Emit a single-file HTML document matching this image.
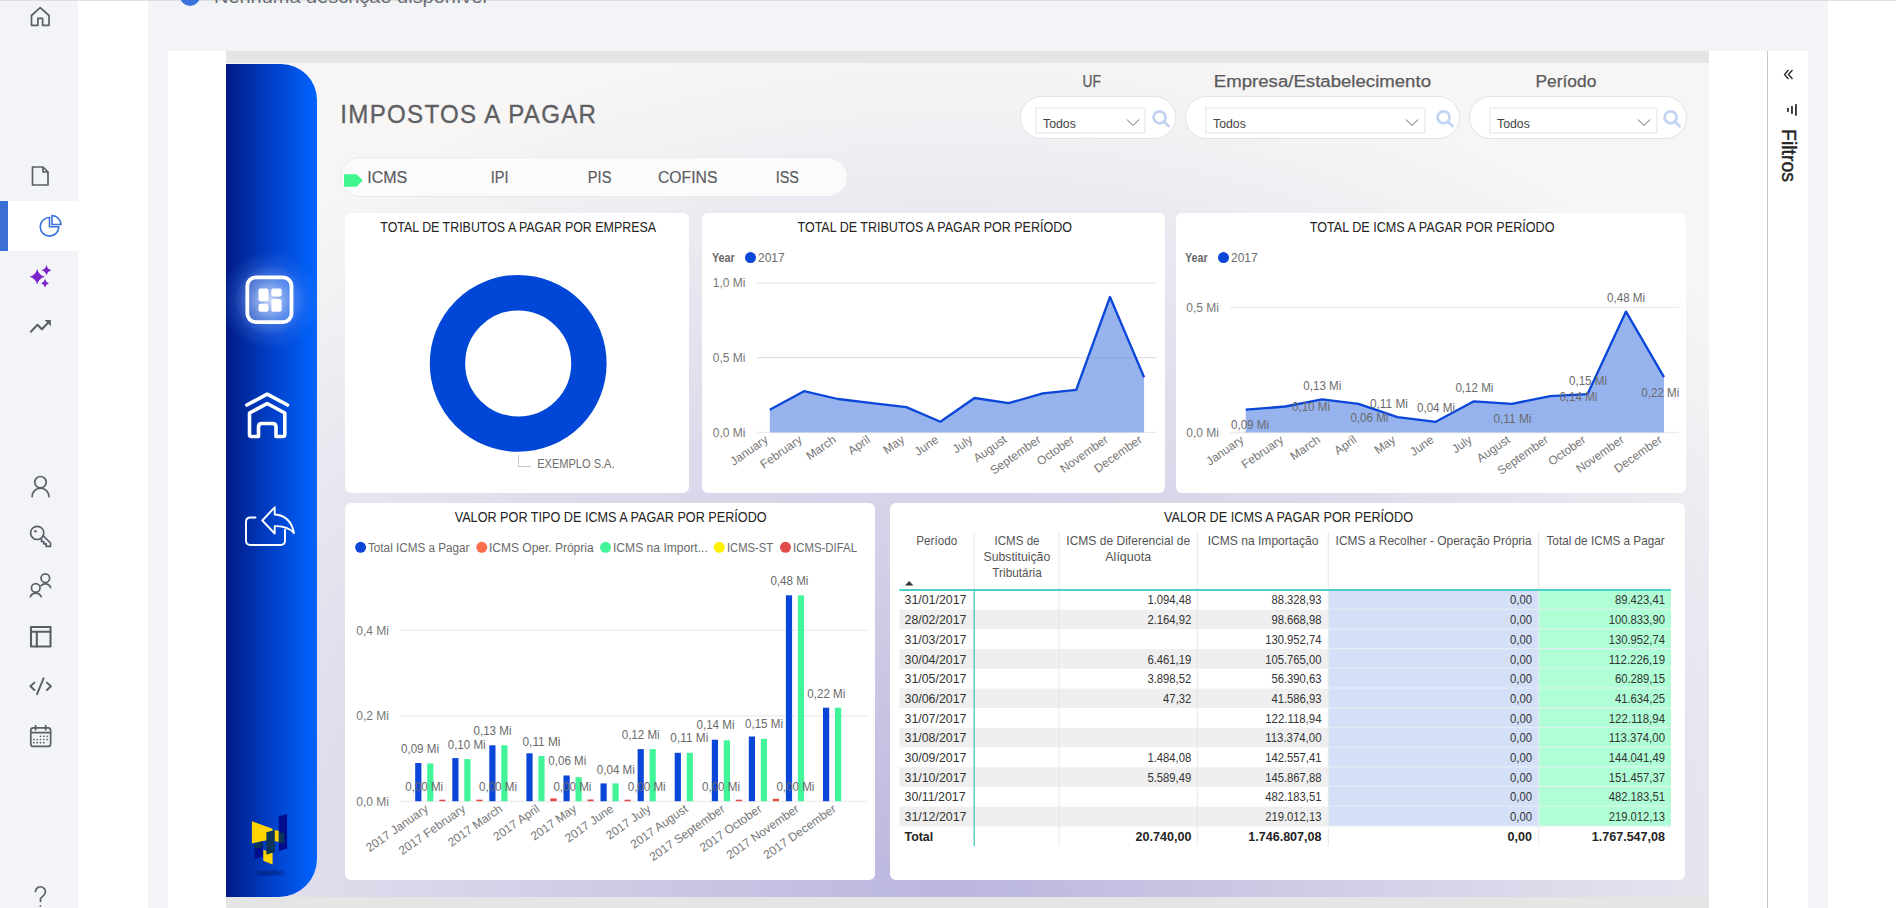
<!DOCTYPE html>
<html><head><meta charset="utf-8">
<style>
*{margin:0;padding:0;box-sizing:border-box}
html,body{width:1896px;height:908px;overflow:hidden;background:#fff;font-family:"Liberation Sans",sans-serif}
.a{position:absolute}
#topline{left:0;top:0;width:1896px;height:1px;background:#dddfdc}
#side{left:0;top:1px;width:78px;height:907px;background:#f3f4f8}
#main{left:148px;top:1px;width:1680px;height:907px;background:#f3f4f8}
#card{left:168px;top:51px;width:1640px;height:857px;background:#fff}
#canvas{left:226px;top:51px;width:1483px;height:857px;background:#e5e5e5}
#bg{left:226px;top:63px;width:1483px;height:834px;background:radial-gradient(ellipse 1050px 860px at 724px 834px,#bab6de 0%,#f7f6f5 100%)}
#bluebar{left:226px;top:64px;width:91px;height:833px;border-radius:0 36px 38px 0;
 background:linear-gradient(90deg,#001b84 0%,#0040c8 50%,#0064ff 100%)}
.tab{top:167px;font-size:16.5px;color:#5b5c60;line-height:20px;white-space:nowrap;letter-spacing:-0.6px}
.flab{top:70px;font-size:16.5px;color:#5a5a5c;text-align:center;line-height:22px;white-space:nowrap}
.pill{top:96px;height:43px;border-radius:21.5px;background:#fff;border:1px solid #e3e3e5}
.dd{top:106.5px;height:27px;border:2px solid #f1f1f1;background:#fff}
.dd span{position:absolute;left:6px;top:8.5px;font-size:12.3px;color:#444;line-height:14px}
.cardw{background:#fff;border-radius:6px}
.ttl{font-size:14px;color:#252423;text-align:center;white-space:nowrap}
</style></head><body>
<div class="a" id="topline"></div>
<div class="a" id="side"></div>
<div class="a" id="main"></div>
<div class="a" id="card"></div>
<div class="a" id="canvas"></div>
<div class="a" id="bg"></div>
<div class="a" id="bluebar"></div>



<!-- bluebar icons -->
<div class="a" style="left:226px;top:230px;width:91px;height:140px;background:radial-gradient(circle at 44px 70px,rgba(210,225,255,0.9) 0,rgba(150,185,255,0.5) 20px,rgba(100,150,255,0.18) 36px,rgba(60,120,255,0) 50px)"></div>
<svg class="a" style="left:226px;top:64px" width="91" height="833" viewBox="226 64 91 833">
 <rect x="247.3" y="277.3" width="44.2" height="44.8" rx="8.5" fill="rgba(255,255,255,0.12)" stroke="#fff" stroke-width="3.8"/>
 <g fill="#fff">
  <rect x="258.5" y="288.5" width="10" height="12.7" rx="2"/>
  <rect x="258.5" y="303.7" width="10" height="8" rx="2"/>
  <rect x="271.3" y="288.5" width="10.3" height="8" rx="2"/>
  <rect x="271.3" y="299" width="10.3" height="12.7" rx="2"/>
 </g>
 <g fill="none" stroke="#fff" stroke-width="3.6" stroke-linecap="round" stroke-linejoin="round">
  <path d="M246.8 405 L267.2 394.2 L287.6 405"/>
  <path d="M249.5 413 L267.2 403.5 L284.8 413 V434.5 Q284.8 436.5 282.8 436.5 H276 V427 Q276 423.5 272.5 423.5 H262 Q258.5 423.5 258.5 427 V436.5 H251.5 Q249.5 436.5 249.5 434.5 Z"/>
 </g>
 <g fill="none" stroke="#fff" stroke-width="1.9" stroke-linejoin="round" stroke-linecap="round">
  <path d="M255.5 517.5 H250.5 Q246 517.5 246 522 V540.5 Q246 545 250.5 545 H280.5 Q285 545 285 540.5 V529.8"/>
  <path d="M262.3 520.5 L274.7 507.3 V514.5 Q290.5 515.5 294 533 Q287 525.5 274.7 526.2 V533.5 Z"/>
 </g>
 <ellipse cx="270" cy="873" rx="15" ry="2.5" fill="rgba(0,20,90,0.55)" filter="url(#blur1)"/>
 <defs><filter id="blur1"><feGaussianBlur stdDeviation="1.5"/></filter></defs>
 <polygon points="251.9,821.2 272.6,828.7 272.6,839 251.9,843.5" fill="#ffd400"/>
 <polygon points="278.8,816.3 287.1,813.9 287.1,848.5 278.8,851" fill="#000d8c"/>
 <polygon points="254.5,844 262.9,841 262.9,856.4 254.5,859" fill="#000d8c"/>
 <polygon points="263.3,849.8 272.6,852.9 272.6,864.4 263.3,860.8" fill="#ffd400"/>
 <polygon points="266.4,832.2 274.8,830 274.8,852 266.4,854.7" fill="#0d3557"/>
 <polygon points="274.8,830 278.8,831 278.8,842 274.8,841" fill="#ffd400"/>
 <polygon points="278.8,832 284.3,833.3 284.3,843.8 278.8,842.5" fill="#0d3557"/>
 <polygon points="254.5,844 262.9,841 262.9,847 254.5,849" fill="#0d3557"/>
</svg>

<!-- left sidebar icons -->
<svg class="a" style="left:0;top:0" width="78" height="908" viewBox="0 0 78 908">
 <g fill="none" stroke="#5a5e67" stroke-width="1.7" stroke-linejoin="round" stroke-linecap="round">
  <path d="M31.5 15.5 L40.2 7.6 L49 15.5 V25.3 H42.6 V18.4 H37.9 V25.3 H31.5 Z"/>
  <path d="M32.5 167 H43 L48 172 V185 H32.5 Z M43 167 V172 H48"/>
  <path d="M30.9 331.8 L37.5 324.8 L41.9 329.2 L48.8 322" stroke-width="2"/>
  <circle cx="40.5" cy="482.2" r="5.7"/>
  <path d="M32.1 496.6 A8.4 8.4 0 0 1 48.9 496.6"/>
  <circle cx="37.2" cy="532.9" r="6.6"/>
  <path d="M43.2 535.9 L50.5 543 V546.4 H46.2 V543.9 H43.9 V541.6 H41.5 V539"/>
  <circle cx="45.3" cy="578.2" r="4.3"/>
  <path d="M41 585.6 A5.8 5.8 0 0 1 50.6 587.5"/>
  <circle cx="35.75" cy="587.9" r="4.3"/>
  <path d="M30.4 596.7 A5.8 5.8 0 0 1 41.1 596.7"/>
  <rect x="31" y="627" width="19.5" height="19.5" stroke-width="2.1"/>
  <path d="M31 631.8 H50.5 M36.8 631.8 V646.5" stroke-width="2.1"/>
  <path d="M34.4 682.6 L30.4 686.3 L34.4 690 M46.9 682.6 L50.9 686.3 L46.9 690" stroke-width="1.9"/><path d="M43.6 678.3 L37 694.2" stroke-width="1.9"/>
  <rect x="30.8" y="727.8" width="19.8" height="18.6" rx="2.5"/>
  <path d="M30.8 732.6 H50.6 M35.6 725.5 V729.8 M45.7 725.5 V729.8"/>
  <path d="M35.5 891.5 A5 4.8 0 1 1 44 895 L40.5 898.5 V901.5"/>
 </g>
 <g fill="#5a5e67">
  <circle cx="40.3" cy="905.8" r="0.9"/>
  <polygon points="44.6,320 50.9,320 50.9,326.3"/>
  <circle cx="40.5" cy="736.3" r="0.85"/><circle cx="43.8" cy="736.3" r="0.85"/><circle cx="47.1" cy="736.3" r="0.85"/>
  <circle cx="33.9" cy="739.5" r="0.85"/><circle cx="37.2" cy="739.5" r="0.85"/><circle cx="40.5" cy="739.5" r="0.85"/><circle cx="43.8" cy="739.5" r="0.85"/><circle cx="47.1" cy="739.5" r="0.85"/>
  <circle cx="33.9" cy="742.7" r="0.85"/><circle cx="37.2" cy="742.7" r="0.85"/><circle cx="40.5" cy="742.7" r="0.85"/><circle cx="43.8" cy="742.7" r="0.85"/>
  <circle cx="35.4" cy="531.3" r="1.2"/>
 </g>
 <rect x="0" y="201" width="78" height="50" fill="#fff"/>
 <rect x="0" y="201" width="8" height="50" fill="#3b6fd6"/>
 <g fill="none" stroke="#3a72df" stroke-width="1.6">
  <path d="M49.5 217.5 A9.3 9.3 0 1 0 58.8 226.8 H49.5 Z"/>
  <path d="M52 215.5 A9.3 9.3 0 0 1 61 224.5 H52 Z"/>
 </g>
 <g fill="#7b23cc">
  <path d="M37.2 269 Q38.8 275.2 45 276.8 Q38.8 278.4 37.2 284.6 Q35.6 278.4 29.4 276.8 Q35.6 275.2 37.2 269 Z"/>
  <path d="M46.5 265 Q47.5 269.3 51.5 270.3 Q47.5 271.3 46.5 275.5 Q45.5 271.3 41.5 270.3 Q45.5 269.3 46.5 265 Z"/>
  <path d="M45 279 Q45.9 282.4 49 283.3 Q45.9 284.2 45 287.6 Q44.1 284.2 41 283.3 Q44.1 282.4 45 279 Z"/>
 </g>
</svg>

<!-- cards -->
<div class="a cardw" style="left:345px;top:213px;width:344px;height:280px"></div>
<div class="a cardw" style="left:702px;top:213px;width:463px;height:280px"></div>
<div class="a cardw" style="left:1176px;top:213px;width:510px;height:280px"></div>
<div class="a cardw" style="left:345px;top:503px;width:530px;height:377px"></div>
<div class="a cardw" style="left:890px;top:503px;width:795px;height:377px"></div>


<!-- top description -->
<div class="a" style="left:180px;top:-14px;width:20px;height:20px;border-radius:50%;background:#3b73de"></div>
<svg class="a" style="left:0;top:0" width="600" height="12" viewBox="0 0 600 12"><text x="214" y="2.5" font-family='"Liberation Sans",sans-serif' font-size="19" fill="#6b6e75" textLength="273" lengthAdjust="spacingAndGlyphs">Nenhuma descrição disponível</text></svg>

<!-- title -->
<svg class="a" style="left:0;top:0" width="700" height="140" viewBox="0 0 700 140"><text x="340.3" y="123.3" font-family='"Liberation Sans",sans-serif' font-size="26" letter-spacing="1.4" fill="#5e5f63" stroke="#5e5f63" stroke-width="0.35" textLength="257" lengthAdjust="spacingAndGlyphs">IMPOSTOS A PAGAR</text></svg>

<!-- tabs -->
<div class="a" style="left:340px;top:157px;width:508px;height:40px;border-radius:20px;background:#fbfbfb;border:1px solid #e9e9eb"></div>
<svg class="a" style="left:343px;top:173px" width="22" height="15" viewBox="0 0 22 15"><path d="M1 1.2 H13.5 L19.8 7.5 L13.5 13.8 H1 Z" fill="#3ef88f"/></svg>
<svg class="a" style="left:0;top:0" width="900" height="200" viewBox="0 0 900 200"><g font-family='"Liberation Sans",sans-serif' font-size="16.7" fill="#5b5c60" stroke="#5b5c60" stroke-width="0.2">
<text x="367.2" y="182.5" textLength="40" lengthAdjust="spacingAndGlyphs">ICMS</text>
<text x="490.8" y="182.5" textLength="17.8" lengthAdjust="spacingAndGlyphs">IPI</text>
<text x="587.8" y="182.5" textLength="23.6" lengthAdjust="spacingAndGlyphs">PIS</text>
<text x="658" y="182.5" textLength="59.5" lengthAdjust="spacingAndGlyphs">COFINS</text>
<text x="775.7" y="182.5" textLength="23.2" lengthAdjust="spacingAndGlyphs">ISS</text>
</g></svg>

<!-- slicers -->
<svg class="a" style="left:0;top:0" width="1709" height="100" viewBox="0 0 1709 100">
 <g font-family='"Liberation Sans",sans-serif' font-size="16.3" fill="#5a5a5c" stroke="#5a5a5c" stroke-width="0.25">
  <text x="1082.6" y="86.6" textLength="18.4" lengthAdjust="spacingAndGlyphs">UF</text>
  <text x="1213.8" y="86.6" textLength="217.2" lengthAdjust="spacingAndGlyphs">Empresa/Estabelecimento</text>
  <text x="1535.5" y="86.6" textLength="60.8" lengthAdjust="spacingAndGlyphs">Período</text>
 </g>
</svg>
<div class="a pill" style="left:1020px;width:156px"></div>
<div class="a pill" style="left:1185px;width:275px"></div>
<div class="a pill" style="left:1469px;width:218px"></div>
<div class="a dd" style="left:1035px;width:111px"><span>Todos</span></div>
<div class="a dd" style="left:1205px;width:221px"><span>Todos</span></div>
<div class="a dd" style="left:1489px;width:169px"><span>Todos</span></div>
<svg class="a" style="left:0;top:0" width="1709" height="150" viewBox="0 0 1709 150">
 <g fill="none" stroke="#666" stroke-width="1">
  <path d="M1127 119.5 L1133 125.5 L1139 119.5"/>
  <path d="M1406 119.5 L1412 125.5 L1418 119.5"/>
  <path d="M1638 119.5 L1644 125.5 L1650 119.5"/>
 </g>
 <g fill="none" stroke="#c2d3f2" stroke-width="2.7" stroke-linecap="round">
  <circle cx="1159.6" cy="117.3" r="6"/><path d="M1164 121.8 L1168.5 126"/>
  <circle cx="1443.6" cy="117.3" r="6"/><path d="M1448 121.8 L1452.5 126"/>
  <circle cx="1670.6" cy="117.3" r="6"/><path d="M1675 121.8 L1679.5 126"/>
 </g>
</svg>

<!-- CHARTS_START -->
<svg class="a" style="left:0;top:0" width="1896" height="908" viewBox="0 0 1896 908"><text x="380.3" y="232" font-size="14.5" fill="#252423" textLength="275.7" lengthAdjust="spacingAndGlyphs" font-family='"Liberation Sans",sans-serif'>TOTAL DE TRIBUTOS A PAGAR POR EMPRESA</text><text x="797.5" y="232" font-size="14.5" fill="#252423" textLength="274.5" lengthAdjust="spacingAndGlyphs" font-family='"Liberation Sans",sans-serif'>TOTAL DE TRIBUTOS A PAGAR POR PERÍODO</text><text x="1309.7" y="232" font-size="14.5" fill="#252423" textLength="244.79999999999995" lengthAdjust="spacingAndGlyphs" font-family='"Liberation Sans",sans-serif'>TOTAL DE ICMS A PAGAR POR PERÍODO</text><text x="454.7" y="522" font-size="14.5" fill="#252423" textLength="311.90000000000003" lengthAdjust="spacingAndGlyphs" font-family='"Liberation Sans",sans-serif'>VALOR POR TIPO DE ICMS A PAGAR POR PERÍODO</text><text x="1164" y="522" font-size="14.5" fill="#252423" textLength="249" lengthAdjust="spacingAndGlyphs" font-family='"Liberation Sans",sans-serif'>VALOR DE ICMS A PAGAR POR PERÍODO</text><circle cx="518.2" cy="363.4" r="70.7" fill="none" stroke="#0047d7" stroke-width="35.4"/><path d="M518.5 455 V466.5 H531" fill="none" stroke="#c8c8c8" stroke-width="1"/><text x="537.2" y="467.5" font-size="12.5" fill="#6f6f6f" textLength="77.3" lengthAdjust="spacingAndGlyphs" font-family='"Liberation Sans",sans-serif'>EXEMPLO S.A.</text><text x="712" y="261.90000000000003" font-size="12" font-weight="bold" fill="#6a6a6a" textLength="22.8" lengthAdjust="spacingAndGlyphs" font-family='"Liberation Sans",sans-serif'>Year</text><circle cx="750.5" cy="257.6" r="5.5" fill="#0a46d8"/><text x="758" y="261.90000000000003" font-size="12" fill="#6a6a6a" font-family='"Liberation Sans",sans-serif'>2017</text><text x="1185" y="261.90000000000003" font-size="12" font-weight="bold" fill="#6a6a6a" textLength="22.8" lengthAdjust="spacingAndGlyphs" font-family='"Liberation Sans",sans-serif'>Year</text><circle cx="1223.5" cy="257.6" r="5.5" fill="#0a46d8"/><text x="1231" y="261.90000000000003" font-size="12" fill="#6a6a6a" font-family='"Liberation Sans",sans-serif'>2017</text><line x1="757" y1="283" x2="1156.5" y2="283" stroke="#ececec" stroke-width="1.3"/><line x1="757" y1="357.7" x2="1156.5" y2="357.7" stroke="#ececec" stroke-width="1.3"/><line x1="757" y1="432.4" x2="1156.5" y2="432.4" stroke="#ececec" stroke-width="1.3"/><text x="745.5" y="287.3" font-size="12" fill="#777" text-anchor="end" font-family='"Liberation Sans",sans-serif'>1,0 Mi</text><text x="745.5" y="362.0" font-size="12" fill="#777" text-anchor="end" font-family='"Liberation Sans",sans-serif'>0,5 Mi</text><text x="745.5" y="436.7" font-size="12" fill="#777" text-anchor="end" font-family='"Liberation Sans",sans-serif'>0,0 Mi</text><path d="M769.8 432.4 L769.8 409.7 L804.0 391.2 L838.0 399.0 L872.2 403.2 L906.3 407.1 L940.4 421.7 L974.5 398.0 L1008.6 403.2 L1042.8 393.4 L1076.2 389.9 L1110.0 297.0 L1144.1 377.2 L1144.1 432.4 Z" fill="#97b3ee"/><path d="M769.8 409.7 L804.0 391.2 L838.0 399.0 L872.2 403.2 L906.3 407.1 L940.4 421.7 L974.5 398.0 L1008.6 403.2 L1042.8 393.4 L1076.2 389.9 L1110.0 297.0 L1144.1 377.2" fill="none" stroke="#0a46d8" stroke-width="2.3" stroke-linejoin="round"/><line x1="757" y1="357.7" x2="1156.5" y2="357.7" stroke="rgba(0,0,0,0.05)" stroke-width="1.3"/><text transform="translate(768.8,441.4) rotate(-35)" text-anchor="end" font-size="12" fill="#777" font-family='"Liberation Sans",sans-serif'>January</text><text transform="translate(803.0,441.4) rotate(-35)" text-anchor="end" font-size="12" fill="#777" font-family='"Liberation Sans",sans-serif'>February</text><text transform="translate(837.0,441.4) rotate(-35)" text-anchor="end" font-size="12" fill="#777" font-family='"Liberation Sans",sans-serif'>March</text><text transform="translate(871.2,441.4) rotate(-35)" text-anchor="end" font-size="12" fill="#777" font-family='"Liberation Sans",sans-serif'>April</text><text transform="translate(905.3,441.4) rotate(-35)" text-anchor="end" font-size="12" fill="#777" font-family='"Liberation Sans",sans-serif'>May</text><text transform="translate(939.4,441.4) rotate(-35)" text-anchor="end" font-size="12" fill="#777" font-family='"Liberation Sans",sans-serif'>June</text><text transform="translate(973.5,441.4) rotate(-35)" text-anchor="end" font-size="12" fill="#777" font-family='"Liberation Sans",sans-serif'>July</text><text transform="translate(1007.6,441.4) rotate(-35)" text-anchor="end" font-size="12" fill="#777" font-family='"Liberation Sans",sans-serif'>August</text><text transform="translate(1041.8,441.4) rotate(-35)" text-anchor="end" font-size="12" fill="#777" font-family='"Liberation Sans",sans-serif'>September</text><text transform="translate(1075.2,441.4) rotate(-35)" text-anchor="end" font-size="12" fill="#777" font-family='"Liberation Sans",sans-serif'>October</text><text transform="translate(1109.0,441.4) rotate(-35)" text-anchor="end" font-size="12" fill="#777" font-family='"Liberation Sans",sans-serif'>November</text><text transform="translate(1143.1,441.4) rotate(-35)" text-anchor="end" font-size="12" fill="#777" font-family='"Liberation Sans",sans-serif'>December</text><line x1="1230" y1="307.4" x2="1678.6" y2="307.4" stroke="#ececec" stroke-width="1.3"/><line x1="1230" y1="432.5" x2="1678.6" y2="432.5" stroke="#ececec" stroke-width="1.3"/><text x="1219" y="311.7" font-size="12" fill="#777" text-anchor="end" font-family='"Liberation Sans",sans-serif'>0,5 Mi</text><text x="1219" y="436.8" font-size="12" fill="#777" text-anchor="end" font-family='"Liberation Sans",sans-serif'>0,0 Mi</text><path d="M1245.7 432.5 L1245.7 409.7 L1285.4 406.5 L1322.1 399.3 L1358.5 403.9 L1397.5 417.2 L1435.8 421.8 L1473.9 401.3 L1511.9 403.9 L1550.2 396.1 L1587.6 394.1 L1626.0 311.6 L1664.0 377.2 L1664.0 432.5 Z" fill="#97b3ee"/><path d="M1245.7 409.7 L1285.4 406.5 L1322.1 399.3 L1358.5 403.9 L1397.5 417.2 L1435.8 421.8 L1473.9 401.3 L1511.9 403.9 L1550.2 396.1 L1587.6 394.1 L1626.0 311.6 L1664.0 377.2" fill="none" stroke="#0a46d8" stroke-width="2.3" stroke-linejoin="round"/><text transform="translate(1244.7,441.5) rotate(-35)" text-anchor="end" font-size="12" fill="#777" font-family='"Liberation Sans",sans-serif'>January</text><text transform="translate(1284.4,441.5) rotate(-35)" text-anchor="end" font-size="12" fill="#777" font-family='"Liberation Sans",sans-serif'>February</text><text transform="translate(1321.1,441.5) rotate(-35)" text-anchor="end" font-size="12" fill="#777" font-family='"Liberation Sans",sans-serif'>March</text><text transform="translate(1357.5,441.5) rotate(-35)" text-anchor="end" font-size="12" fill="#777" font-family='"Liberation Sans",sans-serif'>April</text><text transform="translate(1396.5,441.5) rotate(-35)" text-anchor="end" font-size="12" fill="#777" font-family='"Liberation Sans",sans-serif'>May</text><text transform="translate(1434.8,441.5) rotate(-35)" text-anchor="end" font-size="12" fill="#777" font-family='"Liberation Sans",sans-serif'>June</text><text transform="translate(1472.9,441.5) rotate(-35)" text-anchor="end" font-size="12" fill="#777" font-family='"Liberation Sans",sans-serif'>July</text><text transform="translate(1510.9,441.5) rotate(-35)" text-anchor="end" font-size="12" fill="#777" font-family='"Liberation Sans",sans-serif'>August</text><text transform="translate(1549.2,441.5) rotate(-35)" text-anchor="end" font-size="12" fill="#777" font-family='"Liberation Sans",sans-serif'>September</text><text transform="translate(1586.6,441.5) rotate(-35)" text-anchor="end" font-size="12" fill="#777" font-family='"Liberation Sans",sans-serif'>October</text><text transform="translate(1625.0,441.5) rotate(-35)" text-anchor="end" font-size="12" fill="#777" font-family='"Liberation Sans",sans-serif'>November</text><text transform="translate(1663.0,441.5) rotate(-35)" text-anchor="end" font-size="12" fill="#777" font-family='"Liberation Sans",sans-serif'>December</text><text x="1231" y="428.59999999999997" font-size="12" fill="#6a6a6a" textLength="38" lengthAdjust="spacingAndGlyphs" font-family='"Liberation Sans",sans-serif'>0,09 Mi</text><text x="1292" y="411.2" font-size="12" fill="#6a6a6a" textLength="38" lengthAdjust="spacingAndGlyphs" font-family='"Liberation Sans",sans-serif'>0,10 Mi</text><text x="1303.3" y="389.59999999999997" font-size="12" fill="#6a6a6a" textLength="38" lengthAdjust="spacingAndGlyphs" font-family='"Liberation Sans",sans-serif'>0,13 Mi</text><text x="1350.4" y="422.09999999999997" font-size="12" fill="#6a6a6a" textLength="38" lengthAdjust="spacingAndGlyphs" font-family='"Liberation Sans",sans-serif'>0,06 Mi</text><text x="1369.9" y="408.09999999999997" font-size="12" fill="#6a6a6a" textLength="38" lengthAdjust="spacingAndGlyphs" font-family='"Liberation Sans",sans-serif'>0,11 Mi</text><text x="1417" y="412.3" font-size="12" fill="#6a6a6a" textLength="38" lengthAdjust="spacingAndGlyphs" font-family='"Liberation Sans",sans-serif'>0,04 Mi</text><text x="1455.4" y="391.8" font-size="12" fill="#6a6a6a" textLength="38" lengthAdjust="spacingAndGlyphs" font-family='"Liberation Sans",sans-serif'>0,12 Mi</text><text x="1493.4" y="422.7" font-size="12" fill="#6a6a6a" textLength="38" lengthAdjust="spacingAndGlyphs" font-family='"Liberation Sans",sans-serif'>0,11 Mi</text><text x="1559.4" y="400.9" font-size="12" fill="#6a6a6a" textLength="38" lengthAdjust="spacingAndGlyphs" font-family='"Liberation Sans",sans-serif'>0,14 Mi</text><text x="1569" y="384.7" font-size="12" fill="#6a6a6a" textLength="38" lengthAdjust="spacingAndGlyphs" font-family='"Liberation Sans",sans-serif'>0,15 Mi</text><text x="1607.1" y="301.8" font-size="12" fill="#6a6a6a" textLength="38" lengthAdjust="spacingAndGlyphs" font-family='"Liberation Sans",sans-serif'>0,48 Mi</text><text x="1641.3" y="396.7" font-size="12" fill="#6a6a6a" textLength="38" lengthAdjust="spacingAndGlyphs" font-family='"Liberation Sans",sans-serif'>0,22 Mi</text><line x1="400" y1="630.4" x2="867.5" y2="630.4" stroke="#ececec" stroke-width="1.3"/><line x1="400" y1="715.8" x2="867.5" y2="715.8" stroke="#ececec" stroke-width="1.3"/><line x1="400" y1="801.4" x2="867.5" y2="801.4" stroke="#ececec" stroke-width="1.3"/><text x="389" y="634.6999999999999" font-size="12" fill="#777" text-anchor="end" font-family='"Liberation Sans",sans-serif'>0,4 Mi</text><text x="389" y="720.0999999999999" font-size="12" fill="#777" text-anchor="end" font-family='"Liberation Sans",sans-serif'>0,2 Mi</text><text x="389" y="805.6999999999999" font-size="12" fill="#777" text-anchor="end" font-family='"Liberation Sans",sans-serif'>0,0 Mi</text><rect x="415.2" y="763.0" width="6.2" height="38.2" fill="#0a46d8"/><rect x="427.2" y="763.5" width="6.2" height="37.7" fill="#41f598"/><rect x="439.2" y="799.7" width="6.2" height="1.5" fill="#e24a4a"/><rect x="452.3" y="758.1" width="6.2" height="43.1" fill="#0a46d8"/><rect x="464.3" y="759.1" width="6.2" height="42.1" fill="#41f598"/><rect x="476.3" y="799.7" width="6.2" height="1.5" fill="#e24a4a"/><rect x="489.3" y="745.3" width="6.2" height="55.9" fill="#0a46d8"/><rect x="501.3" y="745.3" width="6.2" height="55.9" fill="#41f598"/><rect x="526.4" y="753.3" width="6.2" height="47.9" fill="#0a46d8"/><rect x="538.4" y="756.0" width="6.2" height="45.2" fill="#41f598"/><rect x="550.4" y="798.4" width="6.2" height="2.8" fill="#e24a4a"/><rect x="563.5" y="775.5" width="6.2" height="25.7" fill="#0a46d8"/><rect x="575.5" y="777.1" width="6.2" height="24.1" fill="#41f598"/><rect x="587.5" y="799.5" width="6.2" height="1.7" fill="#e24a4a"/><rect x="600.5" y="783.4" width="6.2" height="17.8" fill="#0a46d8"/><rect x="612.5" y="783.4" width="6.2" height="17.8" fill="#41f598"/><rect x="624.5" y="799.7" width="6.2" height="1.5" fill="#e24a4a"/><rect x="637.6" y="749.1" width="6.2" height="52.1" fill="#0a46d8"/><rect x="649.6" y="749.1" width="6.2" height="52.1" fill="#41f598"/><rect x="674.7" y="752.8" width="6.2" height="48.4" fill="#0a46d8"/><rect x="686.7" y="752.8" width="6.2" height="48.4" fill="#41f598"/><rect x="711.8" y="739.7" width="6.2" height="61.5" fill="#0a46d8"/><rect x="723.8" y="740.3" width="6.2" height="60.9" fill="#41f598"/><rect x="735.8" y="799.7" width="6.2" height="1.5" fill="#e24a4a"/><rect x="748.8" y="736.5" width="6.2" height="64.7" fill="#0a46d8"/><rect x="760.8" y="738.9" width="6.2" height="62.3" fill="#41f598"/><rect x="772.8" y="798.8" width="6.2" height="2.4" fill="#e24a4a"/><rect x="785.9" y="595.3" width="6.2" height="205.9" fill="#0a46d8"/><rect x="797.9" y="595.3" width="6.2" height="205.9" fill="#41f598"/><rect x="823.0" y="707.7" width="6.2" height="93.5" fill="#0a46d8"/><rect x="835.0" y="707.7" width="6.2" height="93.5" fill="#41f598"/><circle cx="360.6" cy="547.3" r="5.5" fill="#0a46d8"/><text x="368" y="551.5" font-size="12" fill="#6a6a6a" textLength="101.5" lengthAdjust="spacingAndGlyphs" font-family='"Liberation Sans",sans-serif'>Total ICMS a Pagar</text><circle cx="481.8" cy="547.3" r="5.5" fill="#fb6e4e"/><text x="489" y="551.5" font-size="12" fill="#6a6a6a" textLength="104.60000000000002" lengthAdjust="spacingAndGlyphs" font-family='"Liberation Sans",sans-serif'>ICMS Oper. Própria</text><circle cx="605.5" cy="547.3" r="5.5" fill="#41f598"/><text x="613" y="551.5" font-size="12" fill="#6a6a6a" textLength="94.79999999999995" lengthAdjust="spacingAndGlyphs" font-family='"Liberation Sans",sans-serif'>ICMS na Import...</text><circle cx="719.3" cy="547.3" r="5.5" fill="#fff000"/><text x="727" y="551.5" font-size="12" fill="#6a6a6a" textLength="46" lengthAdjust="spacingAndGlyphs" font-family='"Liberation Sans",sans-serif'>ICMS-ST</text><circle cx="785.5" cy="547.3" r="5.5" fill="#e24a4a"/><text x="793" y="551.5" font-size="12" fill="#6a6a6a" textLength="64" lengthAdjust="spacingAndGlyphs" font-family='"Liberation Sans",sans-serif'>ICMS-DIFAL</text><text x="401" y="752.5" font-size="12" fill="#6a6a6a" textLength="38" lengthAdjust="spacingAndGlyphs" font-family='"Liberation Sans",sans-serif'>0,09 Mi</text><text x="405.2" y="791.2" font-size="12" fill="#6a6a6a" textLength="38" lengthAdjust="spacingAndGlyphs" font-family='"Liberation Sans",sans-serif'>0,00 Mi</text><text x="447.7" y="749.1" font-size="12" fill="#6a6a6a" textLength="38" lengthAdjust="spacingAndGlyphs" font-family='"Liberation Sans",sans-serif'>0,10 Mi</text><text x="473.5" y="734.9000000000001" font-size="12" fill="#6a6a6a" textLength="38" lengthAdjust="spacingAndGlyphs" font-family='"Liberation Sans",sans-serif'>0,13 Mi</text><text x="479" y="791.2" font-size="12" fill="#6a6a6a" textLength="38" lengthAdjust="spacingAndGlyphs" font-family='"Liberation Sans",sans-serif'>0,00 Mi</text><text x="522.5" y="745.6" font-size="12" fill="#6a6a6a" textLength="38" lengthAdjust="spacingAndGlyphs" font-family='"Liberation Sans",sans-serif'>0,11 Mi</text><text x="548.3" y="765.4000000000001" font-size="12" fill="#6a6a6a" textLength="38" lengthAdjust="spacingAndGlyphs" font-family='"Liberation Sans",sans-serif'>0,06 Mi</text><text x="553.4" y="791.2" font-size="12" fill="#6a6a6a" textLength="38" lengthAdjust="spacingAndGlyphs" font-family='"Liberation Sans",sans-serif'>0,00 Mi</text><text x="596.8" y="774.0" font-size="12" fill="#6a6a6a" textLength="38" lengthAdjust="spacingAndGlyphs" font-family='"Liberation Sans",sans-serif'>0,04 Mi</text><text x="621.7" y="738.8000000000001" font-size="12" fill="#6a6a6a" textLength="38" lengthAdjust="spacingAndGlyphs" font-family='"Liberation Sans",sans-serif'>0,12 Mi</text><text x="627.7" y="791.2" font-size="12" fill="#6a6a6a" textLength="38" lengthAdjust="spacingAndGlyphs" font-family='"Liberation Sans",sans-serif'>0,00 Mi</text><text x="670.3" y="741.8000000000001" font-size="12" fill="#6a6a6a" textLength="38" lengthAdjust="spacingAndGlyphs" font-family='"Liberation Sans",sans-serif'>0,11 Mi</text><text x="696.5" y="728.9000000000001" font-size="12" fill="#6a6a6a" textLength="38" lengthAdjust="spacingAndGlyphs" font-family='"Liberation Sans",sans-serif'>0,14 Mi</text><text x="702" y="791.2" font-size="12" fill="#6a6a6a" textLength="38" lengthAdjust="spacingAndGlyphs" font-family='"Liberation Sans",sans-serif'>0,00 Mi</text><text x="745" y="728.0" font-size="12" fill="#6a6a6a" textLength="38" lengthAdjust="spacingAndGlyphs" font-family='"Liberation Sans",sans-serif'>0,15 Mi</text><text x="770.4" y="584.5" font-size="12" fill="#6a6a6a" textLength="38" lengthAdjust="spacingAndGlyphs" font-family='"Liberation Sans",sans-serif'>0,48 Mi</text><text x="776.4" y="791.2" font-size="12" fill="#6a6a6a" textLength="38" lengthAdjust="spacingAndGlyphs" font-family='"Liberation Sans",sans-serif'>0,00 Mi</text><text x="807.3" y="698.4000000000001" font-size="12" fill="#6a6a6a" textLength="38" lengthAdjust="spacingAndGlyphs" font-family='"Liberation Sans",sans-serif'>0,22 Mi</text><text transform="translate(429.2,810.6) rotate(-35)" text-anchor="end" font-size="12" fill="#777" font-family='"Liberation Sans",sans-serif'>2017 January</text><text transform="translate(466.3,810.6) rotate(-35)" text-anchor="end" font-size="12" fill="#777" font-family='"Liberation Sans",sans-serif'>2017 February</text><text transform="translate(503.3,810.6) rotate(-35)" text-anchor="end" font-size="12" fill="#777" font-family='"Liberation Sans",sans-serif'>2017 March</text><text transform="translate(540.4,810.6) rotate(-35)" text-anchor="end" font-size="12" fill="#777" font-family='"Liberation Sans",sans-serif'>2017 April</text><text transform="translate(577.5,810.6) rotate(-35)" text-anchor="end" font-size="12" fill="#777" font-family='"Liberation Sans",sans-serif'>2017 May</text><text transform="translate(614.5,810.6) rotate(-35)" text-anchor="end" font-size="12" fill="#777" font-family='"Liberation Sans",sans-serif'>2017 June</text><text transform="translate(651.6,810.6) rotate(-35)" text-anchor="end" font-size="12" fill="#777" font-family='"Liberation Sans",sans-serif'>2017 July</text><text transform="translate(688.7,810.6) rotate(-35)" text-anchor="end" font-size="12" fill="#777" font-family='"Liberation Sans",sans-serif'>2017 August</text><text transform="translate(725.8,810.6) rotate(-35)" text-anchor="end" font-size="12" fill="#777" font-family='"Liberation Sans",sans-serif'>2017 September</text><text transform="translate(762.8,810.6) rotate(-35)" text-anchor="end" font-size="12" fill="#777" font-family='"Liberation Sans",sans-serif'>2017 October</text><text transform="translate(799.9,810.6) rotate(-35)" text-anchor="end" font-size="12" fill="#777" font-family='"Liberation Sans",sans-serif'>2017 November</text><text transform="translate(837.0,810.6) rotate(-35)" text-anchor="end" font-size="12" fill="#777" font-family='"Liberation Sans",sans-serif'>2017 December</text></svg>
<svg class="a" style="left:0;top:0" width="1896" height="908" viewBox="0 0 1896 908"><rect x="899.3" y="590.0" width="429.0" height="19.7" fill="#ffffff"/><rect x="1328.3" y="590.0" width="210.4" height="19.7" fill="#d4e0f7"/><rect x="1538.7" y="590.0" width="132.3" height="19.7" fill="#b0fed5"/><line x1="1328.3" y1="609.2" x2="1671" y2="609.2" stroke="#e9eef4" stroke-width="1"/><rect x="899.3" y="609.7" width="429.0" height="19.7" fill="#efefef"/><rect x="1328.3" y="609.7" width="210.4" height="19.7" fill="#d4e0f7"/><rect x="1538.7" y="609.7" width="132.3" height="19.7" fill="#b0fed5"/><line x1="1328.3" y1="628.9" x2="1671" y2="628.9" stroke="#e9eef4" stroke-width="1"/><rect x="899.3" y="629.4" width="429.0" height="19.7" fill="#ffffff"/><rect x="1328.3" y="629.4" width="210.4" height="19.7" fill="#d4e0f7"/><rect x="1538.7" y="629.4" width="132.3" height="19.7" fill="#b0fed5"/><line x1="1328.3" y1="648.6" x2="1671" y2="648.6" stroke="#e9eef4" stroke-width="1"/><rect x="899.3" y="649.1" width="429.0" height="19.7" fill="#efefef"/><rect x="1328.3" y="649.1" width="210.4" height="19.7" fill="#d4e0f7"/><rect x="1538.7" y="649.1" width="132.3" height="19.7" fill="#b0fed5"/><line x1="1328.3" y1="668.3" x2="1671" y2="668.3" stroke="#e9eef4" stroke-width="1"/><rect x="899.3" y="668.8" width="429.0" height="19.7" fill="#ffffff"/><rect x="1328.3" y="668.8" width="210.4" height="19.7" fill="#d4e0f7"/><rect x="1538.7" y="668.8" width="132.3" height="19.7" fill="#b0fed5"/><line x1="1328.3" y1="688.0" x2="1671" y2="688.0" stroke="#e9eef4" stroke-width="1"/><rect x="899.3" y="688.5" width="429.0" height="19.7" fill="#efefef"/><rect x="1328.3" y="688.5" width="210.4" height="19.7" fill="#d4e0f7"/><rect x="1538.7" y="688.5" width="132.3" height="19.7" fill="#b0fed5"/><line x1="1328.3" y1="707.7" x2="1671" y2="707.7" stroke="#e9eef4" stroke-width="1"/><rect x="899.3" y="708.2" width="429.0" height="19.7" fill="#ffffff"/><rect x="1328.3" y="708.2" width="210.4" height="19.7" fill="#d4e0f7"/><rect x="1538.7" y="708.2" width="132.3" height="19.7" fill="#b0fed5"/><line x1="1328.3" y1="727.4" x2="1671" y2="727.4" stroke="#e9eef4" stroke-width="1"/><rect x="899.3" y="727.9" width="429.0" height="19.7" fill="#efefef"/><rect x="1328.3" y="727.9" width="210.4" height="19.7" fill="#d4e0f7"/><rect x="1538.7" y="727.9" width="132.3" height="19.7" fill="#b0fed5"/><line x1="1328.3" y1="747.1" x2="1671" y2="747.1" stroke="#e9eef4" stroke-width="1"/><rect x="899.3" y="747.6" width="429.0" height="19.7" fill="#ffffff"/><rect x="1328.3" y="747.6" width="210.4" height="19.7" fill="#d4e0f7"/><rect x="1538.7" y="747.6" width="132.3" height="19.7" fill="#b0fed5"/><line x1="1328.3" y1="766.8" x2="1671" y2="766.8" stroke="#e9eef4" stroke-width="1"/><rect x="899.3" y="767.3" width="429.0" height="19.7" fill="#efefef"/><rect x="1328.3" y="767.3" width="210.4" height="19.7" fill="#d4e0f7"/><rect x="1538.7" y="767.3" width="132.3" height="19.7" fill="#b0fed5"/><line x1="1328.3" y1="786.5" x2="1671" y2="786.5" stroke="#e9eef4" stroke-width="1"/><rect x="899.3" y="787.0" width="429.0" height="19.7" fill="#ffffff"/><rect x="1328.3" y="787.0" width="210.4" height="19.7" fill="#d4e0f7"/><rect x="1538.7" y="787.0" width="132.3" height="19.7" fill="#b0fed5"/><line x1="1328.3" y1="806.2" x2="1671" y2="806.2" stroke="#e9eef4" stroke-width="1"/><rect x="899.3" y="806.7" width="429.0" height="19.7" fill="#efefef"/><rect x="1328.3" y="806.7" width="210.4" height="19.7" fill="#d4e0f7"/><rect x="1538.7" y="806.7" width="132.3" height="19.7" fill="#b0fed5"/><line x1="1328.3" y1="825.9" x2="1671" y2="825.9" stroke="#e9eef4" stroke-width="1"/><line x1="1059" y1="532" x2="1059" y2="846" stroke="#e6e6e6" stroke-width="1"/><line x1="1197.3" y1="532" x2="1197.3" y2="846" stroke="#e6e6e6" stroke-width="1"/><line x1="1328.3" y1="532" x2="1328.3" y2="846" stroke="#e6e6e6" stroke-width="1"/><line x1="1538.7" y1="532" x2="1538.7" y2="846" stroke="#e6e6e6" stroke-width="1"/><line x1="974.2" y1="532" x2="974.2" y2="590" stroke="#e6e6e6" stroke-width="1"/><line x1="974.2" y1="590" x2="974.2" y2="846" stroke="#36c2ba" stroke-width="1.2"/><line x1="899.3" y1="590" x2="1671" y2="590" stroke="#4ccfc6" stroke-width="2"/><path d="M905 585.5 L909.2 581 L913.4 585.5 Z" fill="#333"/><text x="904.5" y="604.4" text-anchor="start" font-size="12.4" fill="#333" font-family='"Liberation Sans",sans-serif'>31/01/2017</text><text x="1147.4" y="604.4" font-size="12.4" fill="#333" textLength="43.9" lengthAdjust="spacingAndGlyphs" font-family='"Liberation Sans",sans-serif'>1.094,48</text><text x="1271.4" y="604.4" font-size="12.4" fill="#333" textLength="50.1" lengthAdjust="spacingAndGlyphs" font-family='"Liberation Sans",sans-serif'>88.328,93</text><text x="1510.0" y="604.4" font-size="12.4" fill="#333" textLength="22.0" lengthAdjust="spacingAndGlyphs" font-family='"Liberation Sans",sans-serif'>0,00</text><text x="1614.9" y="604.4" font-size="12.4" fill="#333" textLength="50.1" lengthAdjust="spacingAndGlyphs" font-family='"Liberation Sans",sans-serif'>89.423,41</text><text x="904.5" y="624.1" text-anchor="start" font-size="12.4" fill="#333" font-family='"Liberation Sans",sans-serif'>28/02/2017</text><text x="1147.4" y="624.1" font-size="12.4" fill="#333" textLength="43.9" lengthAdjust="spacingAndGlyphs" font-family='"Liberation Sans",sans-serif'>2.164,92</text><text x="1271.4" y="624.1" font-size="12.4" fill="#333" textLength="50.1" lengthAdjust="spacingAndGlyphs" font-family='"Liberation Sans",sans-serif'>98.668,98</text><text x="1510.0" y="624.1" font-size="12.4" fill="#333" textLength="22.0" lengthAdjust="spacingAndGlyphs" font-family='"Liberation Sans",sans-serif'>0,00</text><text x="1608.7" y="624.1" font-size="12.4" fill="#333" textLength="56.3" lengthAdjust="spacingAndGlyphs" font-family='"Liberation Sans",sans-serif'>100.833,90</text><text x="904.5" y="643.8" text-anchor="start" font-size="12.4" fill="#333" font-family='"Liberation Sans",sans-serif'>31/03/2017</text><text x="1265.2" y="643.8" font-size="12.4" fill="#333" textLength="56.3" lengthAdjust="spacingAndGlyphs" font-family='"Liberation Sans",sans-serif'>130.952,74</text><text x="1510.0" y="643.8" font-size="12.4" fill="#333" textLength="22.0" lengthAdjust="spacingAndGlyphs" font-family='"Liberation Sans",sans-serif'>0,00</text><text x="1608.7" y="643.8" font-size="12.4" fill="#333" textLength="56.3" lengthAdjust="spacingAndGlyphs" font-family='"Liberation Sans",sans-serif'>130.952,74</text><text x="904.5" y="663.5" text-anchor="start" font-size="12.4" fill="#333" font-family='"Liberation Sans",sans-serif'>30/04/2017</text><text x="1147.4" y="663.5" font-size="12.4" fill="#333" textLength="43.9" lengthAdjust="spacingAndGlyphs" font-family='"Liberation Sans",sans-serif'>6.461,19</text><text x="1265.2" y="663.5" font-size="12.4" fill="#333" textLength="56.3" lengthAdjust="spacingAndGlyphs" font-family='"Liberation Sans",sans-serif'>105.765,00</text><text x="1510.0" y="663.5" font-size="12.4" fill="#333" textLength="22.0" lengthAdjust="spacingAndGlyphs" font-family='"Liberation Sans",sans-serif'>0,00</text><text x="1608.7" y="663.5" font-size="12.4" fill="#333" textLength="56.3" lengthAdjust="spacingAndGlyphs" font-family='"Liberation Sans",sans-serif'>112.226,19</text><text x="904.5" y="683.2" text-anchor="start" font-size="12.4" fill="#333" font-family='"Liberation Sans",sans-serif'>31/05/2017</text><text x="1147.4" y="683.2" font-size="12.4" fill="#333" textLength="43.9" lengthAdjust="spacingAndGlyphs" font-family='"Liberation Sans",sans-serif'>3.898,52</text><text x="1271.4" y="683.2" font-size="12.4" fill="#333" textLength="50.1" lengthAdjust="spacingAndGlyphs" font-family='"Liberation Sans",sans-serif'>56.390,63</text><text x="1510.0" y="683.2" font-size="12.4" fill="#333" textLength="22.0" lengthAdjust="spacingAndGlyphs" font-family='"Liberation Sans",sans-serif'>0,00</text><text x="1614.9" y="683.2" font-size="12.4" fill="#333" textLength="50.1" lengthAdjust="spacingAndGlyphs" font-family='"Liberation Sans",sans-serif'>60.289,15</text><text x="904.5" y="702.9" text-anchor="start" font-size="12.4" fill="#333" font-family='"Liberation Sans",sans-serif'>30/06/2017</text><text x="1163.1" y="702.9" font-size="12.4" fill="#333" textLength="28.2" lengthAdjust="spacingAndGlyphs" font-family='"Liberation Sans",sans-serif'>47,32</text><text x="1271.4" y="702.9" font-size="12.4" fill="#333" textLength="50.1" lengthAdjust="spacingAndGlyphs" font-family='"Liberation Sans",sans-serif'>41.586,93</text><text x="1510.0" y="702.9" font-size="12.4" fill="#333" textLength="22.0" lengthAdjust="spacingAndGlyphs" font-family='"Liberation Sans",sans-serif'>0,00</text><text x="1614.9" y="702.9" font-size="12.4" fill="#333" textLength="50.1" lengthAdjust="spacingAndGlyphs" font-family='"Liberation Sans",sans-serif'>41.634,25</text><text x="904.5" y="722.6" text-anchor="start" font-size="12.4" fill="#333" font-family='"Liberation Sans",sans-serif'>31/07/2017</text><text x="1265.2" y="722.6" font-size="12.4" fill="#333" textLength="56.3" lengthAdjust="spacingAndGlyphs" font-family='"Liberation Sans",sans-serif'>122.118,94</text><text x="1510.0" y="722.6" font-size="12.4" fill="#333" textLength="22.0" lengthAdjust="spacingAndGlyphs" font-family='"Liberation Sans",sans-serif'>0,00</text><text x="1608.7" y="722.6" font-size="12.4" fill="#333" textLength="56.3" lengthAdjust="spacingAndGlyphs" font-family='"Liberation Sans",sans-serif'>122.118,94</text><text x="904.5" y="742.3" text-anchor="start" font-size="12.4" fill="#333" font-family='"Liberation Sans",sans-serif'>31/08/2017</text><text x="1265.2" y="742.3" font-size="12.4" fill="#333" textLength="56.3" lengthAdjust="spacingAndGlyphs" font-family='"Liberation Sans",sans-serif'>113.374,00</text><text x="1510.0" y="742.3" font-size="12.4" fill="#333" textLength="22.0" lengthAdjust="spacingAndGlyphs" font-family='"Liberation Sans",sans-serif'>0,00</text><text x="1608.7" y="742.3" font-size="12.4" fill="#333" textLength="56.3" lengthAdjust="spacingAndGlyphs" font-family='"Liberation Sans",sans-serif'>113.374,00</text><text x="904.5" y="762.0" text-anchor="start" font-size="12.4" fill="#333" font-family='"Liberation Sans",sans-serif'>30/09/2017</text><text x="1147.4" y="762.0" font-size="12.4" fill="#333" textLength="43.9" lengthAdjust="spacingAndGlyphs" font-family='"Liberation Sans",sans-serif'>1.484,08</text><text x="1265.2" y="762.0" font-size="12.4" fill="#333" textLength="56.3" lengthAdjust="spacingAndGlyphs" font-family='"Liberation Sans",sans-serif'>142.557,41</text><text x="1510.0" y="762.0" font-size="12.4" fill="#333" textLength="22.0" lengthAdjust="spacingAndGlyphs" font-family='"Liberation Sans",sans-serif'>0,00</text><text x="1608.7" y="762.0" font-size="12.4" fill="#333" textLength="56.3" lengthAdjust="spacingAndGlyphs" font-family='"Liberation Sans",sans-serif'>144.041,49</text><text x="904.5" y="781.7" text-anchor="start" font-size="12.4" fill="#333" font-family='"Liberation Sans",sans-serif'>31/10/2017</text><text x="1147.4" y="781.7" font-size="12.4" fill="#333" textLength="43.9" lengthAdjust="spacingAndGlyphs" font-family='"Liberation Sans",sans-serif'>5.589,49</text><text x="1265.2" y="781.7" font-size="12.4" fill="#333" textLength="56.3" lengthAdjust="spacingAndGlyphs" font-family='"Liberation Sans",sans-serif'>145.867,88</text><text x="1510.0" y="781.7" font-size="12.4" fill="#333" textLength="22.0" lengthAdjust="spacingAndGlyphs" font-family='"Liberation Sans",sans-serif'>0,00</text><text x="1608.7" y="781.7" font-size="12.4" fill="#333" textLength="56.3" lengthAdjust="spacingAndGlyphs" font-family='"Liberation Sans",sans-serif'>151.457,37</text><text x="904.5" y="801.4" text-anchor="start" font-size="12.4" fill="#333" font-family='"Liberation Sans",sans-serif'>30/11/2017</text><text x="1265.2" y="801.4" font-size="12.4" fill="#333" textLength="56.3" lengthAdjust="spacingAndGlyphs" font-family='"Liberation Sans",sans-serif'>482.183,51</text><text x="1510.0" y="801.4" font-size="12.4" fill="#333" textLength="22.0" lengthAdjust="spacingAndGlyphs" font-family='"Liberation Sans",sans-serif'>0,00</text><text x="1608.7" y="801.4" font-size="12.4" fill="#333" textLength="56.3" lengthAdjust="spacingAndGlyphs" font-family='"Liberation Sans",sans-serif'>482.183,51</text><text x="904.5" y="821.1" text-anchor="start" font-size="12.4" fill="#333" font-family='"Liberation Sans",sans-serif'>31/12/2017</text><text x="1265.2" y="821.1" font-size="12.4" fill="#333" textLength="56.3" lengthAdjust="spacingAndGlyphs" font-family='"Liberation Sans",sans-serif'>219.012,13</text><text x="1510.0" y="821.1" font-size="12.4" fill="#333" textLength="22.0" lengthAdjust="spacingAndGlyphs" font-family='"Liberation Sans",sans-serif'>0,00</text><text x="1608.7" y="821.1" font-size="12.4" fill="#333" textLength="56.3" lengthAdjust="spacingAndGlyphs" font-family='"Liberation Sans",sans-serif'>219.012,13</text><text x="904.5" y="840.8" text-anchor="start" font-size="12.4" fill="#252423" font-weight="bold" font-family='"Liberation Sans",sans-serif'>Total</text><text x="1135.5" y="840.8" font-size="12.4" fill="#252423" font-weight="bold" textLength="55.9" lengthAdjust="spacingAndGlyphs" font-family='"Liberation Sans",sans-serif'>20.740,00</text><text x="1248.3" y="840.8" font-size="12.4" fill="#252423" font-weight="bold" textLength="73.2" lengthAdjust="spacingAndGlyphs" font-family='"Liberation Sans",sans-serif'>1.746.807,08</text><text x="1507.6" y="840.8" font-size="12.4" fill="#252423" font-weight="bold" textLength="24.4" lengthAdjust="spacingAndGlyphs" font-family='"Liberation Sans",sans-serif'>0,00</text><text x="1591.8" y="840.8" font-size="12.4" fill="#252423" font-weight="bold" textLength="73.2" lengthAdjust="spacingAndGlyphs" font-family='"Liberation Sans",sans-serif'>1.767.547,08</text><text x="916.3" y="545.2" font-size="12.4" fill="#555" textLength="41.0" lengthAdjust="spacingAndGlyphs" font-family='"Liberation Sans",sans-serif'>Período</text><text x="994.5" y="545.2" font-size="12.4" fill="#555" textLength="45.0" lengthAdjust="spacingAndGlyphs" font-family='"Liberation Sans",sans-serif'>ICMS de</text><text x="983.5" y="561.2" font-size="12.4" fill="#555" textLength="66.7" lengthAdjust="spacingAndGlyphs" font-family='"Liberation Sans",sans-serif'>Substituição</text><text x="992.3" y="577.1" font-size="12.4" fill="#555" textLength="49.5" lengthAdjust="spacingAndGlyphs" font-family='"Liberation Sans",sans-serif'>Tributária</text><text x="1066.3" y="545.2" font-size="12.4" fill="#555" textLength="123.8" lengthAdjust="spacingAndGlyphs" font-family='"Liberation Sans",sans-serif'>ICMS de Diferencial de</text><text x="1105.3" y="561.2" font-size="12.4" fill="#555" textLength="45.8" lengthAdjust="spacingAndGlyphs" font-family='"Liberation Sans",sans-serif'>Alíquota</text><text x="1207.7" y="545.2" font-size="12.4" fill="#555" textLength="110.7" lengthAdjust="spacingAndGlyphs" font-family='"Liberation Sans",sans-serif'>ICMS na Importação</text><text x="1335.6" y="545.2" font-size="12.4" fill="#555" textLength="196.0" lengthAdjust="spacingAndGlyphs" font-family='"Liberation Sans",sans-serif'>ICMS a Recolher - Operação Própria</text><text x="1546.5" y="545.2" font-size="12.4" fill="#555" textLength="118.2" lengthAdjust="spacingAndGlyphs" font-family='"Liberation Sans",sans-serif'>Total de ICMS a Pagar</text></svg>
<!-- CHARTS_END -->

<!-- filter pane -->
<div class="a" style="left:1767px;top:51px;width:1px;height:857px;background:#c8c8c8"></div>
<svg class="a" style="left:1775px;top:60px" width="30" height="130" viewBox="0 0 30 130">
 <g fill="none" stroke="#252423" stroke-width="1.3">
  <path d="M13.5 10 L9.5 14.5 L13.5 19 M17.5 10 L13.5 14.5 L17.5 19"/>
 </g>
 <g fill="#252423">
  <rect x="20.1" y="44.1" width="1.7" height="11.6"/>
  <rect x="16.1" y="46" width="1.7" height="7.9"/>
  <rect x="12.1" y="47.9" width="1.7" height="4"/>
 </g>
</svg>
<div class="a" style="left:1762px;top:146px;width:54px;height:20px;transform:rotate(90deg);font-size:19.5px;color:#252423;line-height:20px;white-space:nowrap;-webkit-text-stroke:0.4px #252423">Filtros</div>
</body></html>
